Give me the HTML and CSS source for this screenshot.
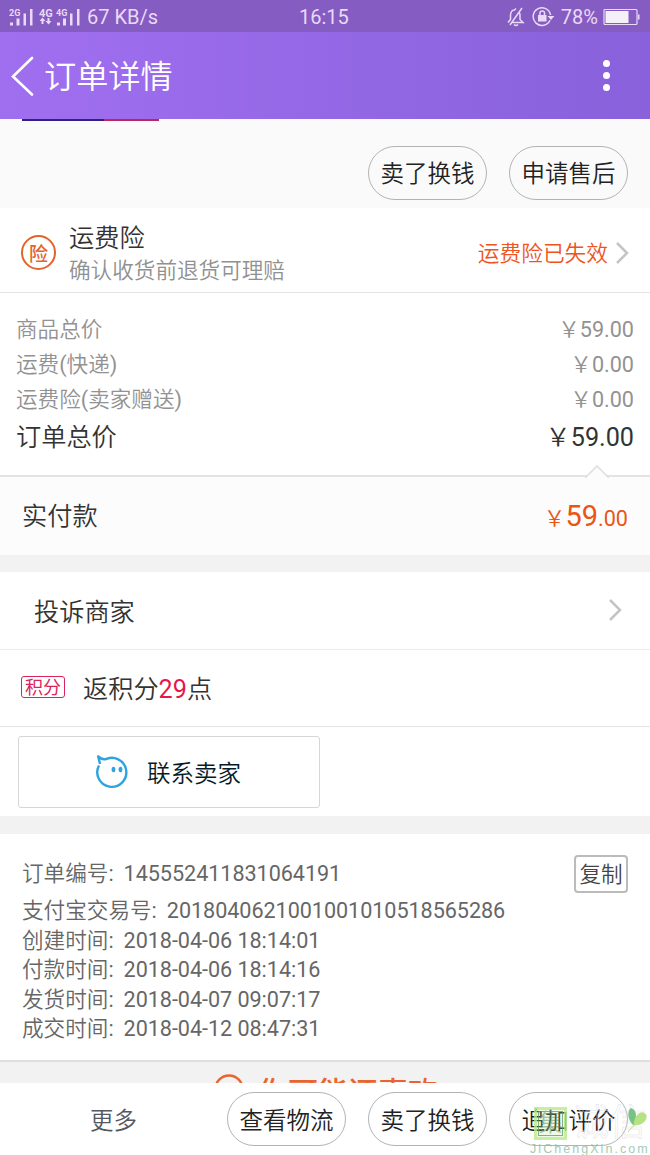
FILE: index.html
```html
<!DOCTYPE html>
<html lang="zh-CN">
<head>
<meta charset="utf-8">
<title>订单详情</title>
<link rel="stylesheet" href="styles.css">
</head>
<body>
<div class="phone">
  <div class="status">
    <svg class="signal" width="74" height="24" viewBox="0 0 74 24">
      <g fill="#ead9f7">
        <path d="M2 17.500h3v3H2zM8.500 13.500h3v7h-3zM15.500 8.500h2.500v12h-2.500zM22 4h2.500v16.500H22zM49 17.500h3v3h-3zM55 13.500h3v7h-3zM62 8.500h2.500v12H62zM69 4h2.500v16.500H69z"/>
        <path d="M34.500 12.500l3 3.500h-2v3h-2v-3h-2zM40.500 19.500l3-3.500h-2v-3h-2v3h-2z"/>
        <text class="net" x="1" y="10.500">2G</text>
        <text class="net net-big" x="31" y="12">4G</text>
        <text class="net" x="48" y="10.500">4G</text>
      </g>
    </svg>
    <span class="speed">67 KB/s</span>
    <span class="clock">16:15</span>
    <div class="status-right">
      <svg width="48" height="22" viewBox="0 0 48 22" fill="none" stroke="#ead9f7" stroke-width="1.500">
        <path d="M2 16.500L4.500 13.500V9Q5 4 8.500 4L10 2.500M13 6Q14 7.500 14 9V13.500L17 16.500H6.500M16 2L4 19M8 18.500Q10 20.500 12 18.500" />
        <path d="M44 14.200A8.800 8.800 0 1 1 44.600 9"/>
        <path d="M41.500 10h7l-3.500 4z" fill="#ead9f7" stroke="none"/>
        <rect x="32" y="9" width="8.500" height="6.500" fill="#ead9f7" stroke="none"/>
        <path d="M34 9V7Q34 5 36.200 5Q38.500 5 38.500 7V9"/>
      </svg>
      <span class="percent">78%</span>
      <svg width="37" height="18" viewBox="0 0 37 18">
        <rect x="1" y="1.500" width="33" height="15" rx="1" fill="none" stroke="#ead9f7" stroke-width="1.200"/>
        <path d="M2.500 3h23v12h-23z" fill="#f4f0f8"/><path d="M35 6.500h1.500v5H35z" fill="#ead9f7"/>
      </svg>
    </div>
  </div>
  <header class="header">
    <svg width="24" height="40" viewBox="0 0 24 40"><path d="M21 2L2 20.500L21 38.500" fill="none" stroke="#fff" stroke-width="2.600" stroke-linecap="round"/></svg>
    <h1 class="title">订单详情</h1>
    <div class="menu"><i></i><i></i><i></i></div>
  </header>
  <main class="content">
    <section class="actions">
      <div class="thumb-edge"></div>
      <div class="pills"><span class="pill">卖了换钱</span><span class="pill">申请售后</span></div>
    </section>
    <section class="insurance">
      <span class="seal">险</span>
      <div class="ins-text"><div class="ins-title">运费险</div><div class="ins-sub">确认收货前退货可理赔</div></div>
      <span class="ins-state">运费险已失效</span>
      <svg class="chevron" width="14" height="24" viewBox="0 0 14 24"><path d="M2 2L12 12L2 22" /></svg>
    </section>
    <section class="prices">
      <div class="price"><span>商品总价</span><span>￥59.00</span></div>
      <div class="price"><span>运费(快递)</span><span>￥0.00</span></div>
      <div class="price"><span>运费险(卖家赠送)</span><span>￥0.00</span></div>
      <div class="price total"><span>订单总价</span><span>￥59.00</span></div>
    </section>
    <section class="paid">
      <svg class="notch" width="24" height="13" viewBox="0 0 24 13"><path d="M0 13L12 1L24 13" fill="#fcfcfc" stroke="#dedede" stroke-width="1.500"/></svg>
      <span class="paid-label">实付款</span><span class="paid-sum">￥<b>59</b>.00</span>
    </section>
    <section class="complaint">
      <span>投诉商家</span>
      <svg class="chevron" width="14" height="24" viewBox="0 0 14 24"><path d="M2 2L12 12L2 22" /></svg>
    </section>
    <section class="points"><span class="tag">积分</span><span>返积分<em>29</em>点</span></section>
    <section class="contact">
      <div class="contact-btn">
        <svg width="36" height="36" viewBox="0 0 36 36">
          <g fill="none" stroke="#2ea3e0" stroke-width="2.400" stroke-linejoin="round"><path d="M11 5.500A14.500 14.500 0 1 1 5 11.500M6 10L4.200 2.500Q8 6 12 5"/></g>
          <ellipse cx="19.500" cy="15.500" rx="1.900" ry="2.800" fill="#2ea3e0"/><ellipse cx="26.500" cy="15.500" rx="1.900" ry="2.800" fill="#2ea3e0"/>
        </svg>
        <span>联系卖家</span>
      </div>
    </section>
    <section class="details">
      <div class="detail first"><span>订单编号:</span><span class="num">145552411831064191</span><span class="copy">复制</span></div>
      <div class="detail"><span>支付宝交易号:</span><span class="num">2018040621001001010518565286</span></div>
      <div class="detail"><span>创建时间:</span><span class="num">2018-04-06 18:14:01</span></div>
      <div class="detail"><span>付款时间:</span><span class="num">2018-04-06 18:14:16</span></div>
      <div class="detail"><span>发货时间:</span><span class="num">2018-04-07 09:07:17</span></div>
      <div class="detail"><span>成交时间:</span><span class="num">2018-04-12 08:47:31</span></div>
    </section>
    <section class="suggest">
      <svg width="30" height="30" viewBox="0 0 30 30"><circle cx="15" cy="15" r="13.500" fill="none" stroke="#ea6430" stroke-width="2.400"/></svg>
      <span>你可能还喜欢</span>
    </section>
  </main>
  <footer class="footer">
    <span class="more">更多</span>
    <div class="pills"><span class="pill">查看物流</span><span class="pill">卖了换钱</span><span class="pill">追加评价</span></div>
    <div class="watermark">
      <div class="wm-top">
        <span class="wm-box">集</span><span class="wm-name">诚信</span>
        <svg class="leaf" width="22" height="26" viewBox="0 0 22 26"><path d="M7 19C-1 12 1 2 4 1C10 3 10 9 7 19" fill="#56b567"/><path d="M7 18C8 7 15 3 19 8C20 14 15 18 7 18M7 18L1 25" fill="#a5dc65" stroke="#a5dc65"/></svg>
      </div>
      <div class="wm-url">JiChengXin.com</div>
    </div>
  </footer>
</div>
</body>
</html>
```

FILE: styles.css
```css
* { box-sizing: border-box; }
body { margin: 0; background: #fff; font-family: Roboto, "Noto Sans CJK SC DemiLight", "Noto Sans CJK SC", sans-serif; font-weight: 400; color: #333; }
.phone { width: 650px; height: 1155px; overflow: hidden; display: flex; flex-direction: column; }
svg { display: block; flex: none; }
span { white-space: nowrap; }
.status { height: 32px; display: grid; grid-template-columns: 79px 212px 1fr auto; align-items: center; padding: 1px 10px 0 8px; background: #855cc1; color: #ead9f7; font-size: 20px; }
.net { font: 700 9px Roboto, sans-serif; }
.net-big { font-size: 11px; }
.status-right { display: flex; align-items: center; }
.percent { margin: 0 5px 0 7px; font-size: 20px; }
.header { height: 87px; display: flex; align-items: center; padding: 0 39px 0 11px; background: linear-gradient(90deg, #a06ff0, #8861db); color: #fff; }
.title { margin: 3px 0 0 9px; font-size: 32.200px; font-weight: 400; line-height: 40px; }
.menu { margin-left: auto; margin-right: 1px; display: flex; flex-direction: column; gap: 5px; }
.menu i { width: 7px; height: 7px; border-radius: 50%; background: #fff; }
.content { height: 964px; overflow: hidden; background: #f2f2f2; }
.actions { height: 89px; background: #fafafa; padding: 0 22px; }
.thumb-edge { width: 137px; height: 2px; background: linear-gradient(90deg, #2d2380 60%, #bd255f 60%); }
.pills { display: flex; justify-content: flex-end; gap: 22px; }
.actions .pills { padding-top: 25px; }
.pill { width: 119px; height: 54px; border: 1px solid #b3b3b3; border-radius: 27px; text-align: center; line-height: 54px; font-size: 23.500px; color: #222; }
.insurance { height: 85px; display: flex; align-items: center; background: #fff; border-bottom: 1px solid #e4e4e4; padding: 0 21px; }
.seal { width: 35px; height: 35px; margin-top: 5px; border: 2px solid #e2642c; border-radius: 50%; color: #e2642c; font: 500 19px/31px "Noto Sans CJK SC", sans-serif; text-align: center; }
.ins-text { margin: 10px 0 0 13px; }
.ins-title { font-size: 25.200px; line-height: 32px; }
.ins-sub { font-size: 21.600px; line-height: 32px; color: #909090; }
.ins-state { margin: 7px 7px 0 auto; font-size: 21.700px; line-height: 28px; color: #ee5420; }
.chevron { fill: none; stroke: #c4c4c4; stroke-width: 2.500; }
.insurance .chevron { margin-top: 5px; }
.prices { height: 182px; background: #fff; padding: 19px 16px 0; }
.price { display: flex; justify-content: space-between; height: 35px; line-height: 35px; font-size: 21.600px; color: #929292; }
.total { height: 40px; line-height: 41px; font-size: 25.200px; color: #333; }
.paid { position: relative; height: 80px; border-top: 2px solid #e3e3e3; background: #fcfcfc; display: flex; align-items: center; justify-content: space-between; padding: 0 22px; font-size: 25.200px; }
.paid-label { margin-top: -5px; }
.notch { position: absolute; right: 41px; top: -12px; }
.paid-sum { color: #ea5514; font-size: 21.600px; margin-top: -1px; }
.paid-sum b { font-size: 29px; font-weight: 400; }
.complaint { height: 78px; margin-top: 17px; background: #fff; border-bottom: 1px solid #ececec; padding: 0 28px 1px 34px; display: flex; align-items: center; justify-content: space-between; font-size: 25.200px; }
.points { height: 77px; background: #fff; border-bottom: 1px solid #e5e5e5; padding: 0 0 2px 21px; display: flex; align-items: center; font-size: 25.200px; }
.tag { width: 44px; height: 22px; margin-right: 18px; border: 1.500px solid #dc245c; border-radius: 3px; color: #dc245c; font: 400 18px/19px "Noto Sans CJK SC", sans-serif; text-align: center; }
.points em { font-style: normal; color: #e6174b; }
.contact { height: 89px; background: #fff; padding: 9px 18px; }
.contact-btn { width: 302px; height: 72px; border: 1px solid #d6d6d6; border-radius: 3px; display: flex; align-items: center; padding-left: 75px; gap: 17px; font-size: 23.500px; color: #051b28; }
.details { height: 228px; margin-top: 18px; padding: 21px 22px 0; background: #fff; border-bottom: 2px solid #dfdfdf; font-size: 21.600px; color: #666; }
.detail { display: flex; height: 29.500px; align-items: baseline; line-height: 29.500px; gap: 10px; }
.detail .num { letter-spacing: -.05px; }
.first { height: 38px; line-height: 38px; align-items: center; margin-bottom: 3px; }
.copy { margin-left: auto; width: 54px; height: 38px; border: 2px solid #bbb; border-radius: 4px; text-align: center; line-height: 35px; color: #444; }
.suggest { display: flex; padding: 12px 0 0 214px; gap: 14px; color: #ea6430; font: 500 30px/32px "Noto Sans CJK SC", sans-serif; }
.footer { position: relative; height: 72px; display: flex; align-items: center; justify-content: space-between; background: #fff; padding: 0 22px 0 90px; }
.more { font-size: 23.500px; color: #555860; }
.footer .pill { line-height: 56px; }
.watermark { position: absolute; left: 530px; top: 24px; width: 120px; opacity: .8; }
.wm-top { display: flex; height: 36px; }
.wm-box { width: 33px; height: 33px; border: 3px solid #b8ec8a; outline: 1px solid #6a996b; outline-offset: -5px; background: #b8ec8a44; color: #568b5daa; font-size: 24px; line-height: 27px; text-align: center; margin-left: 4px; }
.wm-name { margin-left: 5px; font-size: 37px; line-height: 34px; font-weight: 400; color: transparent; -webkit-text-stroke: .5px #ddd9e2; }
.leaf { position: absolute; right: 1px; top: 0; }
.wm-url { font: 400 12.500px/13px "Liberation Sans", sans-serif; letter-spacing: 2.050px; color: #8fbea4; white-space: nowrap; }
```
